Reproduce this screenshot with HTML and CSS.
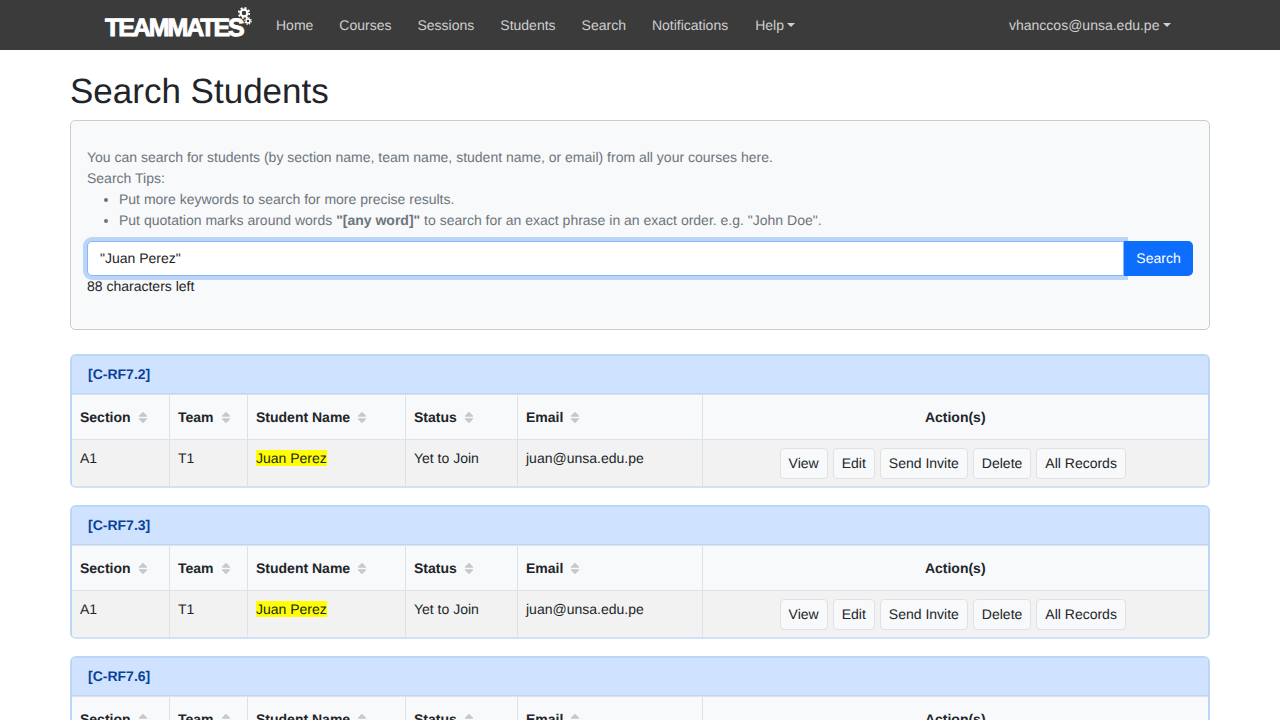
FILE: index.html
```html
<!DOCTYPE html>
<html lang="en">
<head>
    <title>Search Students</title>
    <link rel="stylesheet" href="styles.css">
</head>
<body>
    <nav class="navbar">
        <a class="brand" href="#">
            <span class="brand-text">TEAMMATES</span>
            <svg class="brand-gears" width="18" height="22" viewBox="0 0 18 22">
                <g fill="none" stroke="#fff">
                    <circle cx="7" cy="7" r="3.4" stroke-width="2.2"/>
                    <circle cx="7" cy="7" r="5.2" stroke-width="1.8" stroke-dasharray="2 2.08"/>
                    <circle cx="11" cy="15" r="2" stroke-width="1.4"/>
                    <circle cx="11" cy="15" r="3.2" stroke-width="1.2" stroke-dasharray="1.4 1.11"/>
                </g>
            </svg>
        </a>
        <div class="nav-links">
            <a href="#">Home</a>
            <a href="#">Courses</a>
            <a href="#">Sessions</a>
            <a href="#">Students</a>
            <a href="#">Search</a>
            <a href="#">Notifications</a>
            <a href="#" class="dropdown help-link">Help</a>
        </div>
        <a href="#" class="dropdown nav-user">vhanccos@unsa.edu.pe</a>
    </nav>

    <main class="container">
        <h1>Search Students</h1>

        <section class="search-card">
            <div>You can search for students (by section name, team name, student name, or email) from all your courses here.</div>
            <div>Search Tips:</div>
            <ul>
                <li>Put more keywords to search for more precise results.</li>
                <li>Put quotation marks around words <b>"[any word]"</b> to search for an exact phrase in an exact order. e.g. "John Doe".</li>
            </ul>
            <div class="search-row">
                <input class="search-input" type="text" value="&quot;Juan Perez&quot;">
                <button class="search-button">Search</button>
            </div>
            <div class="chars-left">88 characters left</div>
        </section>

        <div id="results"></div>
    </main>

    <script>
        const courses = ['[C-RF7.2]', '[C-RF7.3]', '[C-RF7.6]'];
        const sortIcon = '<svg class="sort-icon" width="10" height="13" viewBox="0 0 10 13"><path d="M5 1.2 L8.8 5.2 H1.2 Z M5 11.8 L1.2 7.8 H8.8 Z"/></svg>';
        const headers = ['Section', 'Team', 'Student Name', 'Status', 'Email'];
        const actions = ['View', 'Edit', 'Send Invite', 'Delete', 'All Records'];

        const results = document.getElementById('results');
        courses.forEach(course => {
            const card = document.createElement('section');
            card.className = 'course-card';
            card.innerHTML = `
                <div class="course-header">${course}</div>
                <table>
                    <colgroup>
                        <col class="col-section"><col class="col-team"><col class="col-name">
                        <col class="col-status"><col class="col-email"><col>
                    </colgroup>
                    <thead>
                        <tr>
                            ${headers.map(h => `<th>${h}${sortIcon}</th>`).join('')}
                            <th class="actions-head">Action(s)</th>
                        </tr>
                    </thead>
                    <tbody>
                        <tr>
                            <td>A1</td>
                            <td>T1</td>
                            <td><mark>Juan Perez</mark></td>
                            <td>Yet to Join</td>
                            <td>juan@unsa.edu.pe</td>
                            <td class="actions">${actions.map(a => `<button>${a}</button>`).join('')}</td>
                        </tr>
                    </tbody>
                </table>`;
            results.appendChild(card);
        });
    </script>
</body>
</html>
```

FILE: styles.css
```css
* {
    box-sizing: border-box;
}
html, body {
    height: 720px;
    overflow: hidden;
}
body {
    margin: 0;
    font-family: "Liberation Sans", Arial, sans-serif;
    font-size: 14px;
    line-height: 21px;
    color: #212529;
    background-color: #fff;
    text-rendering: geometricPrecision;
}
input, button {
    text-rendering: geometricPrecision;
}
a {
    text-decoration: none;
}

.navbar {
    display: flex;
    align-items: center;
    height: 50px;
    padding-left: 105px;
    background-color: #3b3b3b;
}
.brand {
    display: flex;
    align-items: flex-start;
    width: 158px;
    height: 50px;
}
.brand-text {
    margin-top: 14px;
    font-size: 25px;
    line-height: 28px;
    font-weight: bold;
    letter-spacing: -2.1px;
    color: #fff;
    -webkit-text-stroke: 0.9px #fff;
}
.brand-gears {
    margin: 6px 0 0 -6px;
}
.nav-links {
    display: flex;
    gap: 26px;
    margin-left: 13px;
}
.navbar a:not(.brand) {
    color: #cfcfcf;
}
.help-link {
    margin-left: 1px;
}
.nav-user {
    margin-left: 214px;
}
.dropdown::after {
    content: "";
    display: inline-block;
    margin-left: 3px;
    vertical-align: 3px;
    border-top: 4px solid;
    border-left: 4px solid transparent;
    border-right: 4px solid transparent;
}
.nav-user::after {
    margin-left: 4px;
}

.container {
    width: 1140px;
    margin: 0 auto;
}
h1 {
    margin: 20px 0 7px;
    font-size: 35px;
    line-height: 43px;
    font-weight: normal;
}

.search-card {
    height: 210px;
    padding: 26px 16px 0;
    color: #6c757d;
    background-color: #f8f9fa;
    border: 1px solid #ccc;
    border-radius: 5px;
}
.search-card ul {
    margin: 0;
    padding-left: 32px;
}
.search-row {
    display: flex;
    margin-top: 10px;
}
.search-input {
    flex: 1;
    height: 35px;
    padding: 0 12px 1px;
    font: inherit;
    color: #212529;
    background-color: #fff;
    border: 1px solid #86b7fe;
    border-radius: 5px 0 0 5px;
    outline: none;
    box-shadow: 0 0 0 4px #bcd5f7;
}
.search-button {
    position: relative;
    width: 69px;
    height: 35px;
    font: inherit;
    color: #fff;
    background-color: #0d6efd;
    border: 0;
    border-radius: 0 5px 5px 0;
}
.chars-left {
    color: #212529;
}

.course-card {
    height: 134px;
    margin-top: 24px;
    overflow: hidden;
    border: 2px solid #bcd6f8;
    border-bottom-color: #cfe2f8;
    border-radius: 6px;
}
.course-card + .course-card {
    margin-top: 17px;
}
.course-header {
    height: 38px;
    padding: 8px 16px;
    font-weight: bold;
    color: #084298;
    background-color: #cfe2ff;
    border-bottom: 1px solid #bcd6f8;
}
table {
    width: 100%;
    table-layout: fixed;
    border-collapse: collapse;
}
.col-section { width: 97px; }
.col-team { width: 78px; }
.col-name { width: 158px; }
.col-status { width: 112px; }
.col-email { width: 185px; }
th, td {
    padding: 8px;
    text-align: left;
    border: 1px solid #dee2e6;
}
th + th, td + td {
    padding-left: 8.5px;
}
th:first-child, td:first-child {
    border-left: 0;
}
th:last-child, td:last-child {
    border-right: 0;
}
th {
    height: 45px;
    background-color: #f8f9fa;
}
tr:last-child td {
    border-bottom: 0;
}
td {
    height: 47px;
    vertical-align: top;
    background-color: #f2f2f2;
}
th.actions-head {
    padding-left: 8px;
    text-align: center;
}
.sort-icon {
    margin-left: 7px;
    vertical-align: -2px;
    fill: #c6c8ca;
    stroke: #c6c8ca;
    stroke-width: 1;
    stroke-linejoin: round;
}
mark {
    background-color: #ff0;
    color: inherit;
}
td.actions {
    padding: 8px 5px 0 0;
    text-align: center;
}
.actions button {
    height: 31px;
    margin: 0 2.5px;
    padding: 0 8px;
    font: inherit;
    color: #212529;
    background-color: #f8f9fa;
    border: 1px solid #dfe1e4;
    border-radius: 4px;
}
```
